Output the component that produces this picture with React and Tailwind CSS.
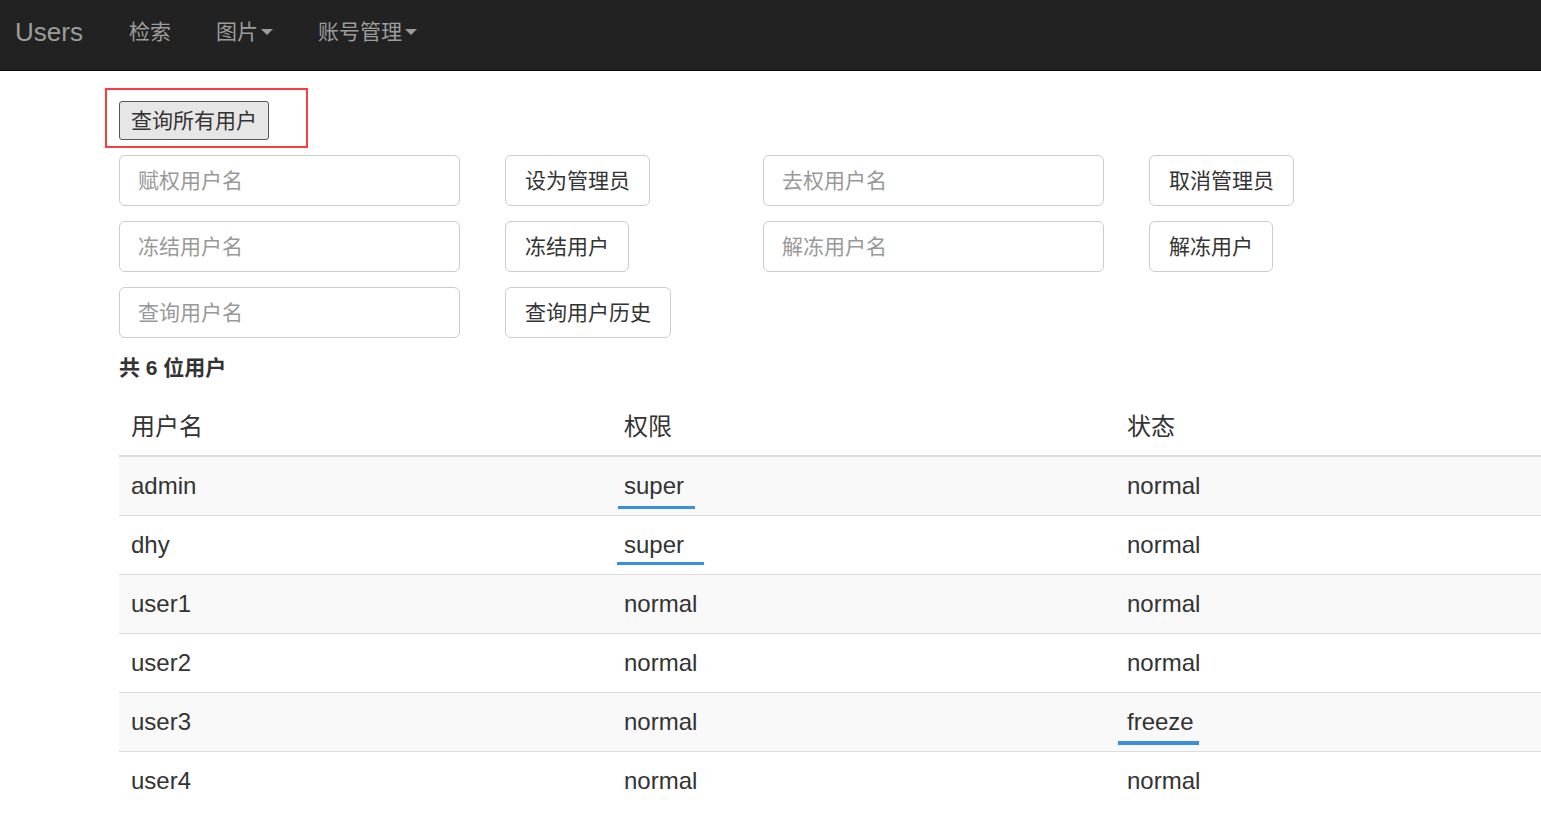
import React from "react";

const font = { fontFamily: '"Liberation Sans", "Noto Sans CJK SC", sans-serif' };

function Caret() {
  return (
    <span className="ml-[3px] inline-block h-0 w-0 border-l-[6px] border-r-[6px] border-t-[6px] border-l-transparent border-r-transparent border-t-[#9d9d9d] align-middle" />
  );
}

function Input({ ph }) {
  return (
    <div className="flex h-[51px] w-[341px] items-center rounded-[6px] border border-[#cccccc] bg-white pl-[18px] text-[21px] text-[#999999]">
      {ph}
    </div>
  );
}

function Btn({ children }) {
  return (
    <div className="flex h-[51px] items-center self-start justify-self-start rounded-[6px] border border-[#cccccc] bg-white px-[19px] text-[21px] text-[#333333]">
      {children}
    </div>
  );
}

const rows = [
  { name: "admin", role: "super", status: "normal", roleLine: { left: 6, top: 49, w: 77, h: 3 } },
  { name: "dhy", role: "super", status: "normal", roleLine: { left: 5, top: 46, w: 87, h: 3 } },
  { name: "user1", role: "normal", status: "normal" },
  { name: "user2", role: "normal", status: "normal" },
  { name: "user3", role: "normal", status: "freeze", statusLine: { left: 3, top: 48, w: 81, h: 4 } },
  { name: "user4", role: "normal", status: "normal" },
];

function Line({ l }) {
  if (!l) return null;
  return (
    <span
      className="absolute bg-[#3b8ee6]"
      style={{ left: l.left, top: l.top, width: l.w, height: l.h }}
    />
  );
}

export default function App() {
  return (
    <div className="h-[815px] w-full overflow-hidden bg-white text-[#333333]" style={font}>
      <div className="flex h-[71px] items-center border-b border-[#080808] bg-[#222222] pb-[6px] text-[#9d9d9d]">
        <span className="ml-[15px] text-[26px]">Users</span>
        <span className="ml-[46px] text-[21px]">检索</span>
        <span className="ml-[45px] flex items-center text-[21px]">
          图片
          <Caret />
        </span>
        <span className="ml-[45px] flex items-center text-[21px]">
          账号管理
          <Caret />
        </span>
      </div>

      <div className="pl-[119px]">
        <div className="relative mt-[30px] inline-block">
          <div className="flex h-[39px] items-center rounded-[3px] border border-[#555555] bg-[#e6e6e6] px-[11px] text-[21px] text-[#333333]">
            查询所有用户
          </div>
          <div className="absolute left-[-14px] top-[-13px] h-[60px] w-[203px] border-2 border-[#ff3b3b]" />
        </div>

        <div className="mt-[15px] grid grid-cols-[386px_258px_386px_auto] gap-y-[15px]">
          <Input ph="赋权用户名" />
          <Btn>设为管理员</Btn>
          <Input ph="去权用户名" />
          <Btn>取消管理员</Btn>
          <Input ph="冻结用户名" />
          <Btn>冻结用户</Btn>
          <Input ph="解冻用户名" />
          <Btn>解冻用户</Btn>
          <Input ph="查询用户名" />
          <Btn>查询用户历史</Btn>
        </div>

        <div className="mt-[15px] h-[30px] text-[21px] font-bold leading-[30px] text-[#333333]">
          共 6 位用户
        </div>

        <div className="mt-[15px] text-[24px] text-[#333333]">
          <div className="flex h-[59px] items-center border-b-2 border-[#dddddd]">
            <div className="w-[493px] pl-[12px]">用户名</div>
            <div className="w-[503px] pl-[12px]">权限</div>
            <div className="flex-1 pl-[12px]">状态</div>
          </div>
          {rows.map((r, i) => (
            <div
              key={r.name}
              className={
                "flex h-[59px] items-center border-[#dddddd] " +
                (i < rows.length - 1 ? "border-b " : "pb-[1px] ") +
                (i % 2 === 0 ? "bg-[#f9f9f9]" : "bg-white")
              }
            >
              <div className="w-[493px] pl-[12px]">{r.name}</div>
              <div className="relative h-full w-[503px]">
                <div className="flex h-full items-center pl-[12px]">{r.role}</div>
                <Line l={r.roleLine} />
              </div>
              <div className="relative h-full flex-1">
                <div className="flex h-full items-center pl-[12px]">{r.status}</div>
                <Line l={r.statusLine} />
              </div>
            </div>
          ))}
        </div>
      </div>
    </div>
  );
}
